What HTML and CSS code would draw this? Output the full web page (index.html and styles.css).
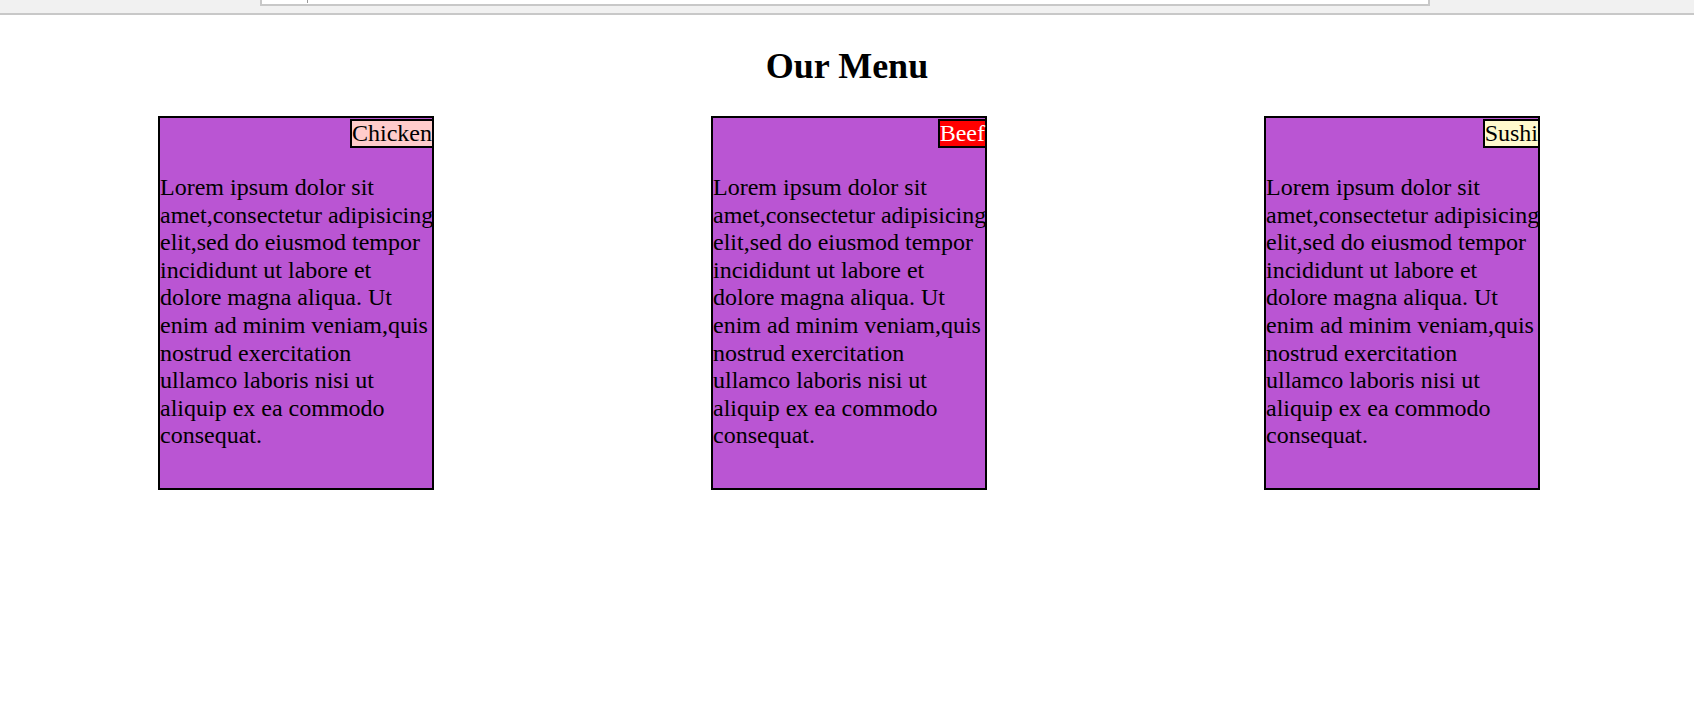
FILE: index.html
```html
<!DOCTYPE html>
<html lang="en">
<head>
<meta charset="utf-8">
<title>Our Menu</title>
<link rel="stylesheet" href="styles.css">
</head>
<body>
  <div class="topbar">
    <div class="urlbox"><span class="caret"></span></div>
  </div>
  <h1 class="title">Our Menu</h1>
  <div class="menu">
    <div class="card">
      <div class="label-row"><span class="label chicken">Chicken</span></div>
      <p class="desc">Lorem ipsum dolor sit amet,consectetur adipisicing elit,sed do eiusmod tempor incididunt ut labore et dolore magna aliqua. Ut enim ad minim veniam,quis nostrud exercitation ullamco laboris nisi ut aliquip ex ea commodo consequat.</p>
    </div>
    <div class="card">
      <div class="label-row"><span class="label beef">Beef</span></div>
      <p class="desc">Lorem ipsum dolor sit amet,consectetur adipisicing elit,sed do eiusmod tempor incididunt ut labore et dolore magna aliqua. Ut enim ad minim veniam,quis nostrud exercitation ullamco laboris nisi ut aliquip ex ea commodo consequat.</p>
    </div>
    <div class="card">
      <div class="label-row"><span class="label sushi">Sushi</span></div>
      <p class="desc">Lorem ipsum dolor sit amet,consectetur adipisicing elit,sed do eiusmod tempor incididunt ut labore et dolore magna aliqua. Ut enim ad minim veniam,quis nostrud exercitation ullamco laboris nisi ut aliquip ex ea commodo consequat.</p>
    </div>
  </div>
</body>
</html>
```

FILE: styles.css
```css
html, body {
  margin: 0;
  padding: 0;
  background: #ffffff;
}

body {
  font-family: "Liberation Serif", "Times New Roman", serif;
  color: #000000;
}

.topbar {
  height: 13px;
  background: #f1f1f1;
  border-bottom: 2px solid #c8c8c8;
  display: flex;
  align-items: flex-start;
}

.urlbox {
  margin-left: 260px;
  width: 1166px;
  height: 4px;
  background: #ffffff;
  border: 2px solid #c8c8c8;
  border-top: none;
  display: flex;
}

.caret {
  margin-left: 45px;
  width: 1px;
  height: 3px;
  background: #999999;
}

.title {
  font-size: 36px;
  font-weight: bold;
  text-align: center;
  margin: 31px 0 29px 0;
  line-height: 41px;
}

.menu {
  display: flex;
  gap: 277px;
  padding-left: 158px;
}

.card {
  width: 272px;
  height: 370px;
  flex: none;
  border: 2px solid #000000;
  background: #ba55d3;
  display: flex;
  flex-direction: column;
}

.label-row {
  display: flex;
  justify-content: flex-end;
  padding-top: 1px;
  margin-right: -2px;
}

.label {
  font-size: 24px;
  line-height: 25px;
  border: 2px solid #000000;
  padding: 0;
}

.chicken {
  background: #ffcccb;
  color: #000000;
}

.beef {
  background: #ff0000;
  color: #ffffff;
}

.sushi {
  background: #fffacd;
  color: #000000;
}

.desc {
  font-size: 24px;
  line-height: 27.6px;
  margin: 26px -2px 0 0;
}
```
